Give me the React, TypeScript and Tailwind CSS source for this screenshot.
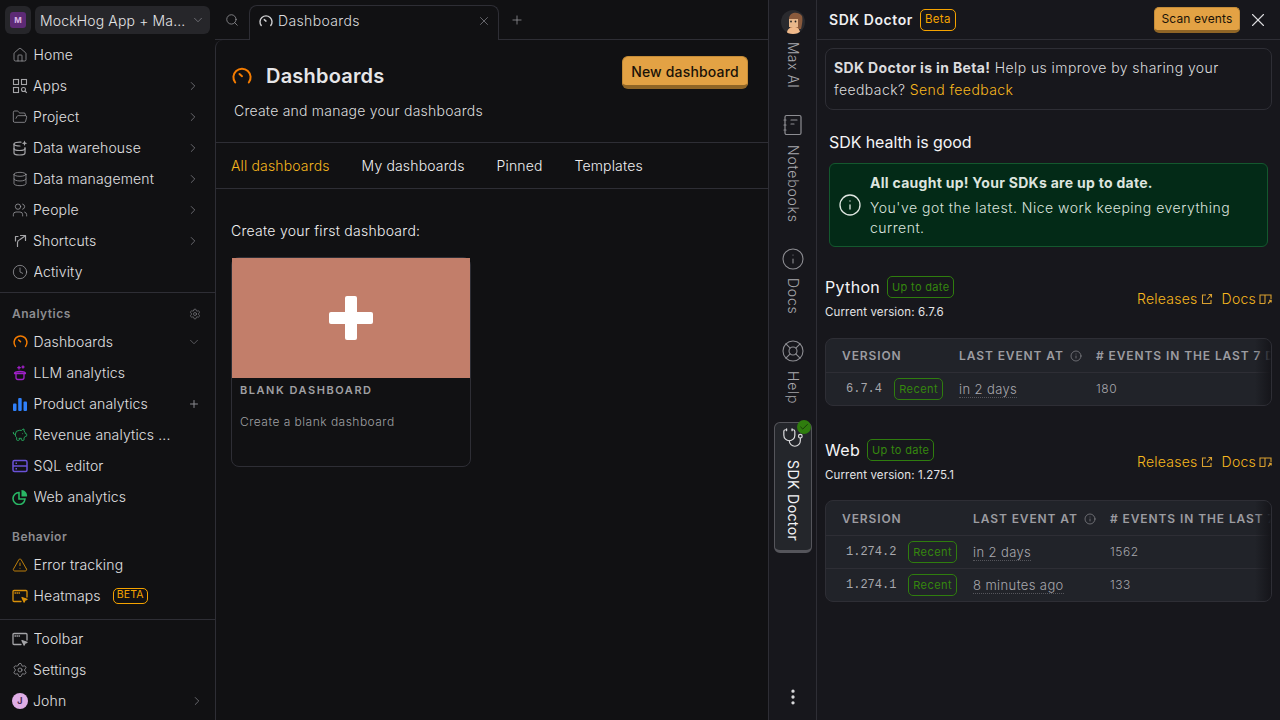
import React from "react";
import {
  Home, FolderOpen, Database, Users, Clock, ChevronRight, ChevronDown, Settings, Plus, TriangleAlert, Search, X, Info, LifeBuoy, Stethoscope, Check, EllipsisVertical, PiggyBank,
} from "lucide-react";

const Gauge = ({ className = "" }: { className?: string }) => (
  <svg viewBox="0 0 20 20" className={className} fill="none" stroke="currentColor" strokeWidth="2" strokeLinecap="round">
    <path d="M3.200 16.500A8.600 8.600 0 1 1 16.800 16.500" />
    <path d="M7.500 8 L10 10.200" />
  </svg>
);

const WindowCursor = ({ className = "" }: { className?: string }) => (
  <svg viewBox="0 0 16 16" className={className} fill="none" stroke="currentColor" strokeWidth="1.300" strokeLinecap="round" strokeLinejoin="round">
    <path d="M9 13.500H2a1 1 0 0 1-1-1V3.500a1 1 0 0 1 1-1h12a1 1 0 0 1 1 1V9" />
    <path d="M3 5h.5M5 5h.5M7 5h.5" />
    <path d="M10 9.500l5 1.800-2 .8-.8 2z" fill="currentColor" />
  </svg>
);

const AppsIcon = ({ className = "" }: { className?: string }) => (
  <svg viewBox="0 0 16 16" className={className} fill="none" stroke="currentColor" strokeWidth="1.100">
    <rect x="1.500" y="1.500" width="5" height="5" />
    <rect x="9.500" y="1.500" width="5" height="5" />
    <rect x="1.500" y="9.500" width="5" height="5" />
    <circle cx="11.500" cy="11.500" r="2" />
    <path d="M13 13l1.800 1.800" />
  </svg>
);

const WarehouseIcon = ({ className = "" }: { className?: string }) => (
  <svg viewBox="0 0 16 16" className={className} fill="none" stroke="currentColor" strokeWidth="1.200" strokeLinecap="round">
    <path d="M9 2.200C5 2 2 2.700 2 4v9c0 1.200 2.500 2 5.500 2s5.500-.8 5.500-2V7.500" />
    <path d="M2 4c0 1.200 2.500 2 6 2M2 8.500c0 1.200 2.500 2 5.500 2s5.500-.8 5.500-2" />
    <path d="M12.500 0.500l.8 2 2 .8-2 .8-.8 2-.8-2-2-.8 2-.8z" fill="currentColor" stroke="none" />
  </svg>
);

const ShortcutIcon = ({ className = "" }: { className?: string }) => (
  <svg viewBox="0 0 16 16" className={className} fill="none" stroke="currentColor" strokeWidth="1.200" strokeLinecap="round" strokeLinejoin="round">
    <path d="M5.500 13.500V9.500C5.500 8 6.500 7 8 6.500L13 3" />
    <path d="M8.500 2.500h5v5" />
    <path d="M3.500 8V3.500H6" />
  </svg>
);

const WebIcon = ({ className = "" }: { className?: string }) => (
  <svg viewBox="0 0 16 16" className={className} fill="none" stroke="currentColor" strokeWidth="1.600">
    <path d="M7 3.500a6 6 0 1 0 6 6.500H7z" />
    <path d="M9.500 1a5.500 5.500 0 0 1 5.500 6.500H9.500z" fill="currentColor" stroke="none" />
  </svg>
);

const NotebookIcon = ({ className = "" }: { className?: string }) => (
  <svg viewBox="0 0 20 22" className={className} fill="none" stroke="currentColor" strokeWidth="1.200" strokeLinecap="round">
    <rect x="2" y="1.500" width="16" height="19" rx="1.500" />
    <path d="M1 6h2M1 11h2M1 16h2" />
    <path d="M8 6h6M8 10h3" />
  </svg>
);

const LinkOut = ({ className = "" }: { className?: string }) => (
  <svg viewBox="0 0 12 12" className={className} fill="none" stroke="currentColor" strokeWidth="1.100">
    <path d="M5 2H1.500v8.500H10V7" />
    <path d="M6 6.500L10.500 1.500M7.500 1.500h3v3" />
  </svg>
);

const DocLink = ({ className = "" }: { className?: string }) => (
  <svg viewBox="0 0 13 12" className={className} fill="none" stroke="currentColor" strokeWidth="1.100">
    <path d="M6 2H1v8.500h5M6 2v8.500M6 2h6v4" />
    <path d="M9 10.500l3-3M10 7.300h2.200v2.200" />
  </svg>
);

const Chev = () => <ChevronRight className="w-3.5 h-3.5 text-[#8a8a90] mr-[1px]" strokeWidth={1.2} />;

function Row({ icon, label, right, gap = "gap-[5.500px]" }: { icon: React.ReactNode; label: React.ReactNode; right?: React.ReactNode; gap?: string }) {
  return (
    <div className={`flex items-center h-[31px] pl-[12px] pr-[14px] ${gap}`}>
      <span className="w-[16px] h-[16px] flex items-center justify-center shrink-0">{icon}</span>
      <span className="flex-1 min-w-0 text-[14px] text-[#e0e0e2] truncate whitespace-nowrap">{label}</span>
      {right}
    </div>
  );
}

const ic = "w-4 h-4 text-[#a5a5a8]";
const sw = 1.1;

function Sidebar() {
  return (
    <div className="w-[215px] shrink-0 flex flex-col bg-[#111113]">
      <div className="h-[39px] shrink-0 flex items-start pt-[6px] pl-[5px] pr-[5px] gap-[4px]">
        <div className="w-[26px] h-[28px] rounded-[6px] bg-[#26262a] flex items-center justify-center">
          <div className="w-[16px] h-[16px] rounded-[3px] bg-[#5d2a75] text-[#d9b6e3] text-[8px] font-bold flex items-center justify-center">M</div>
        </div>
        <div className="flex-1 min-w-0 h-[28px] rounded-[6px] bg-[#26262a] flex items-center pl-[5px] pr-[5px]">
          <span className="flex-1 text-[14px] text-[#e4e4e6] whitespace-nowrap">MockHog App + Ma...</span>
          <ChevronDown className="w-3.5 h-3.5 text-[#8a8a90]" strokeWidth={1.2} />
        </div>
      </div>
      <Row icon={<Home className={ic} strokeWidth={sw} />} label="Home" />
      <Row icon={<AppsIcon className={ic} />} label="Apps" gap="gap-[5px]" right={<Chev />} />
      <Row icon={<FolderOpen className={ic} strokeWidth={sw} />} label="Project" gap="gap-[5px]" right={<Chev />} />
      <Row icon={<WarehouseIcon className={ic} />} label="Data warehouse" gap="gap-[5px]" right={<Chev />} />
      <Row icon={<Database className={ic} strokeWidth={sw} />} label="Data management" gap="gap-[5px]" right={<Chev />} />
      <Row icon={<Users className={ic} strokeWidth={sw} />} label="People" gap="gap-[5px]" right={<Chev />} />
      <Row icon={<ShortcutIcon className={ic} />} label="Shortcuts" gap="gap-[5px]" right={<Chev />} />
      <Row icon={<Clock className={ic} strokeWidth={sw} />} label="Activity" />
      <div className="mt-[5px] h-px bg-[#2e2e35] shrink-0" />
      <div className="h-[42px] shrink-0 flex items-center justify-between pl-[12px] pr-[14px]">
        <span className="text-[12px] font-semibold tracking-[0.04em] text-[#8c8c90]">Analytics</span>
        <Settings className="w-3 h-3 text-[#8c8c90]" strokeWidth={1.2} />
      </div>
      <div className="-mt-[9px] flex flex-col">
        <Row icon={<Gauge className="w-[15px] h-[15px] text-[#f57c00]" />} label="Dashboards" right={<ChevronDown className="w-3.5 h-3.5 text-[#77777c]" strokeWidth={1.2} />} />
        <Row icon={
          <svg viewBox="0 0 16 16" className="w-4 h-4 text-[#a020c8]" fill="none" stroke="currentColor" strokeWidth="1.300" strokeLinecap="round"><path d="M3 8.500h10M4 8.500v4a2 2 0 0 0 2 2h4a2 2 0 0 0 2-2v-4M2.500 8.500c0-1.400 2-2 5.500-2s5.500.6 5.500 2M7 1.500v2.500M5.800 2.700h2.500M11 1v2M10 2h2" /></svg>
        } label="LLM analytics" />
        <Row icon={
          <svg viewBox="0 0 16 16" className="w-4 h-4 text-[#2f80fa]" fill="currentColor"><rect x="1" y="7.500" width="3.500" height="7.500" rx="1" /><rect x="6.200" y="2" width="3.500" height="13" rx="1" /><rect x="11.500" y="5.500" width="3.500" height="9.500" rx="1" /></svg>
        } label="Product analytics" right={<Plus className="w-3 h-3 text-[#8a8a90] mr-[1px]" strokeWidth={2} />} />
        <Row icon={<PiggyBank className="w-4 h-4 text-[#29b765]" strokeWidth={1.3} />} label="Revenue analytics ..." />
        <Row icon={
          <svg viewBox="0 0 16 16" className="w-4 h-4 text-[#6a52d6]" fill="none" stroke="currentColor" strokeWidth="1.500"><rect x="1" y="2.500" width="14" height="11" rx="1.500" /><path d="M1 8h14" /><path d="M3.500 5.300h1.500M3.500 10.800h1.500" /></svg>
        } label="SQL editor" />
        <Row icon={<WebIcon className="w-4 h-4 text-[#29b765]" />} label="Web analytics" />
      </div>
      <div className="h-[40px] shrink-0 flex items-center pl-[12px] pt-[9px]">
        <span className="text-[12px] font-semibold tracking-[0.04em] text-[#8c8c90]">Behavior</span>
      </div>
      <div className="-mt-[3px] flex flex-col">
        <Row icon={<TriangleAlert className="w-4 h-4 text-[#d9910a]" strokeWidth={1.3} />} label="Error tracking" />
        <Row icon={<WindowCursor className="w-4 h-4 text-[#d9910a]" />} label={
          <span className="flex items-center gap-[12px]">Heatmaps<span className="h-[16px] flex items-center border border-[#f5a300] rounded-[5px] text-[#f5a300] text-[10.500px] font-normal leading-none px-[3px]">BETA</span></span>
        } />
      </div>
      <div className="flex-1" />
      <div className="h-px bg-[#2e2e35] shrink-0" />
      <div className="pt-[3px] pb-[4px] flex flex-col">
        <Row icon={<WindowCursor className={ic} />} label="Toolbar" />
        <Row icon={<Settings className={ic} strokeWidth={sw} />} label="Settings" gap="gap-[5px]" />
        <Row icon={<span className="w-4 h-4 rounded-full bg-[#dfaee6] text-[#4b2a55] text-[9px] font-bold flex items-center justify-center">J</span>} label="John" gap="gap-[5px]" right={<ChevronRight className="w-3.5 h-3.5 text-[#8a8a90] -mr-[3px]" strokeWidth={1.2} />} />
      </div>
    </div>
  );
}

function Main() {
  return (
    <div className="flex-1 min-w-0 flex flex-col bg-[#111113]">
      <div className="h-[40px] shrink-0 flex items-end relative">
        <div className="absolute left-0 right-0 bottom-0 h-px bg-[#2e2e35]" />
        <div className="w-[34px] h-[40px] flex items-center justify-center"><Search className="w-[14px] h-[14px] text-[#9a9a9e]" strokeWidth={1.3} /></div>
        <div className="relative z-10 w-[250px] h-[35px] border border-b-0 border-[#2e2e35] rounded-t-[8px] bg-[#111113] flex items-center pl-[9px] pr-[7px] pb-[5px] gap-[5px]">
          <Gauge className="w-[14px] h-[14px] text-[#cfcfd1]" />
          <span className="flex-1 text-[14px] tracking-[0.026em] text-[#dcdcde]">Dashboards</span>
          <X className="w-[14px] h-[14px] text-[#8a8a90]" strokeWidth={1.2} />
        </div>
        <div className="w-[36px] h-[40px] flex items-center justify-center"><Plus className="w-[14px] h-[14px] text-[#9a9a9e]" strokeWidth={1.3} /></div>
      </div>
      <div className="flex-1 border-l border-[#2e2e35] rounded-tl-[8px] flex flex-col">
        <div className="h-[103px] shrink-0 flex items-start justify-between pl-[15px] pr-[20px] pt-[16px] border-b border-[#2e2e35]">
          <div className="flex flex-col">
            <div className="flex items-center gap-[14px] h-[40px] ml-[1px]">
              <Gauge className="w-[20px] h-[20px] text-[#f57c00]" />
              <span className="text-[20px] font-semibold tracking-[0.01em] text-[#e6e6e8]">Dashboards</span>
            </div>
            <span className="mt-[5px] ml-[3px] text-[14px] leading-[20px] tracking-[0.23px] text-[#dcdcde]">Create and manage your dashboards</span>
          </div>
          <div className="h-[33px] w-[126px] rounded-[6px] bg-[#e3a244] border border-[#c48c38] border-b-[4px] border-b-[#8f6526] flex items-center justify-center text-[14px] font-medium tracking-[0.012em] text-[#1a1208]">New dashboard</div>
        </div>
        <div className="h-[46px] shrink-0 flex items-center gap-[32px] pl-[15px] border-b border-[#2e2e35] text-[14px] text-[#f0f0f2]">
          <span className="text-[#f7b81e]">All dashboards</span>
          <span>My dashboards</span>
          <span>Pinned</span>
          <span>Templates</span>
        </div>
        <div className="pl-[15px] pt-[32px]">
          <div className="text-[14px] tracking-[0.019em] text-[#f0f0f2] leading-[20px]">Create your first dashboard:</div>
          <div className="mt-[16px] w-[240px] h-[210px] rounded-[8px] border border-[#2e2e35]">
            <div className="h-[120px] bg-[#c27e6a] flex items-center justify-center">
              <svg viewBox="0 0 44 44" className="w-[44px] h-[44px]" fill="white"><rect x="16" y="0" width="12" height="44" rx="2" /><rect x="0" y="16" width="44" height="12" rx="2" /></svg>
            </div>
            <div className="px-[8px] pt-[4px]">
              <div className="text-[11px] font-semibold tracking-[0.14em] text-[#a0a0a3]">BLANK DASHBOARD</div>
              <div className="mt-[14px] text-[12px] tracking-[0.04em] text-[#a0a0a3]">Create a blank dashboard</div>
            </div>
          </div>
        </div>
      </div>
    </div>
  );
}

function SideItem({ icon, label, gap, track = "tracking-[0.056em]" }: { icon: React.ReactNode; label: string; gap: string; track?: string }) {
  return (
    <div className={`flex flex-col items-center ${gap}`}>
      {icon}
      <span className={`[writing-mode:vertical-rl] text-[14px] text-[#a8a8ad] leading-none ${track}`}>{label}</span>
    </div>
  );
}

function Rail() {
  return (
    <div className="w-[49px] shrink-0 bg-[#17171c] border-l border-r border-[#2e2e35] flex flex-col items-center pt-[10px] pb-[13px]">
      <div className="w-[24px] h-[24px] rounded-full bg-[#2a2a2e] overflow-hidden flex items-center justify-center">
        <svg viewBox="0 0 24 24" className="w-[24px] h-[24px]"><path d="M8 8c1-6 9-7 13-2 1 3 0 9-1 13H9z" fill="#8a5a3c" /><path d="M8 9h9v8H8z" fill="#e8b88c" /><path d="M6 22c1-4 4-5 7-5s5 1 6 5v2H6z" fill="#f0b98a" /><circle cx="10" cy="11.500" r="0.900" fill="#222" /><circle cx="14.500" cy="11.500" r="0.900" fill="#222" /></svg>
      </div>
      <div className="mt-[8px]"><SideItem gap="" icon={null} label="Max AI" track="tracking-[0.016em]" /></div>
      <div className="mt-[26px]"><SideItem gap="gap-[9px]" icon={<NotebookIcon className="w-[20px] h-[22px] text-[#8d8d92]" />} label="Notebooks" /></div>
      <div className="mt-[24px]"><SideItem gap="gap-[7px]" icon={<Info className="w-[24px] h-[24px] text-[#8d8d92]" strokeWidth={1.1} />} label="Docs" /></div>
      <div className="mt-[25px]"><SideItem gap="gap-[8px]" icon={<LifeBuoy className="w-[24px] h-[24px] text-[#8d8d92]" strokeWidth={1.1} />} label="Help" /></div>
      <div className="mt-[17px] relative w-[38px] h-[131px] rounded-[6px] bg-[#24262b] border border-[#55555b] border-b-[3px] flex flex-col items-center pt-[4px] gap-[11px]">
        <Stethoscope className="w-[22px] h-[22px] text-[#dcdcde]" strokeWidth={1.3} />
        <span className="[writing-mode:vertical-rl] text-[14px] font-normal tracking-[0.03em] text-[#f4f4f6] leading-none">SDK Doctor</span>
        <span className="absolute -top-[3px] right-0 w-[14px] h-[14px] rounded-full bg-[#2f7d0e] flex items-center justify-center"><Check className="w-[10px] h-[10px] text-[#14300a]" strokeWidth={2} /></span>
      </div>
      <div className="flex-1" />
      <EllipsisVertical className="w-[20px] h-[20px] text-[#d8d8da]" strokeWidth={2} />
    </div>
  );
}

const RecentBadge = () => (
  <span className="h-[22px] px-[4px] rounded-[5px] border border-[#2f7d0e] text-[#35870e] text-[11px] font-normal tracking-[0.04em] flex items-center">Recent</span>
);

function VersionTable({ rows, first, head, mt }: { rows: { v: string; at: string; n: string }[]; first: string; head: string; mt: string }) {
  return (
    <div className={`relative rounded-[8px] border border-[#2e2e35] bg-[#212329] overflow-hidden ${mt}`}>
      <div className={`flex items-center pt-[1px] text-[12px] font-semibold tracking-[0.075em] text-[#9c9ca1] whitespace-nowrap ${head}`}>
        <div className={`${first} pl-[16px] shrink-0`}>VERSION</div>
        <div className="w-[137px] shrink-0 flex items-center gap-[6px]">LAST EVENT AT<Info className="w-3 h-3" strokeWidth={1.2} /></div>
        <div className="shrink-0">{"# EVENTS IN THE LAST 7 DAYS"}</div>
      </div>
      {rows.map((r) => (
        <div key={r.v} className="flex h-[33px] items-center border-t border-[#2e2e35] text-[#a8a8ad] whitespace-nowrap">
          <div className={`${first} pl-[20px] pr-[16px] shrink-0 flex items-center justify-between`}>
            <span className="font-['Liberation_Mono',monospace] font-normal tracking-normal text-[12px]">{r.v}</span>
            <RecentBadge />
          </div>
          <div className="w-[137px] shrink-0 text-[13px] tracking-[0.03em] pt-[2px]"><span className="border-b border-dotted border-[#55555b]">{r.at}</span></div>
          <div className="text-[12px] tracking-[0.046em]">{r.n}</div>
        </div>
      ))}
      <div className="absolute right-0 top-0 bottom-0 w-[16px] bg-gradient-to-l from-[#15151a] to-transparent" />
    </div>
  );
}

function SdkSection({ name, version, children }: { name: string; version: string; children: React.ReactNode }) {
  return (
    <div>
      <div className="flex items-center justify-between">
        <div className="flex flex-col">
          <div className="flex items-center gap-[7px] h-[22px]">
            <span className="text-[16px] font-normal tracking-[0.02em] text-[#f4f4f6]">{name}</span>
            <span className="h-[22px] px-[4px] rounded-[5px] border border-[#2f7d0e] text-[#35870e] text-[11px] font-normal tracking-[0.03em] flex items-center">Up to date</span>
          </div>
          <span className="mt-[7px] text-[11.500px] font-normal leading-[14px] tracking-[0.012em] text-[#e4e4e6]">{version}</span>
        </div>
        <div className="flex items-center gap-[9px] pt-[2px] text-[14px] tracking-[0.018em] text-[#f7b81e]">
          <span className="flex items-center gap-[3px]">Releases<LinkOut className="w-3 h-3 text-[#d9a030]" /></span>
          <span className="flex items-center gap-[3px]">Docs<DocLink className="w-[13px] h-3 text-[#d9a030]" /></span>
        </div>
      </div>
      {children}
    </div>
  );
}

function Panel() {
  return (
    <div className="flex-1 min-w-0 bg-[#17171c] flex flex-col">
      <div className="h-[40px] shrink-0 border-b border-[#2e2e35] flex items-center pl-[12px] pr-[11px]">
        <span className="text-[14px] font-semibold tracking-[0.04em] text-[#f0f0f2]">SDK Doctor</span>
        <span className="ml-[7px] h-[22px] px-[4px] rounded-[5px] border border-[#f5a300] text-[#f5a300] text-[11.500px] font-normal tracking-[0.03em] flex items-center">Beta</span>
        <div className="flex-1" />
        <div className="h-[26px] w-[86px] rounded-[5px] bg-[#e3a244] border border-[#c48c38] border-b-[3px] border-b-[#8f6526] flex items-center justify-center text-[12px] font-normal tracking-[0.012em] text-[#1a1208]">Scan events</div>
        <X className="ml-[7px] w-[22px] h-[22px] text-[#dcdcde]" strokeWidth={1.2} />
      </div>
      <div className="px-[8px] pt-[8px] flex flex-col">
        <div className="h-[62px] rounded-[8px] border border-[#2e2e35] px-[8px] py-[8px] text-[14px] leading-[22px] tracking-[0.03em] text-[#dcdcde]">
          <strong className="font-bold tracking-[0.025em] text-[#dcdcde]">SDK Doctor is in Beta!</strong> Help us improve by sharing your feedback? <span className="text-[#f7b81e]">Send feedback</span>
        </div>
        <div className="mt-[21px] ml-[4px] text-[16px] font-normal leading-[22px] tracking-[-0.005em] text-[#f4f4f6]">SDK health is good</div>
        <div className="mt-[10px] mx-[4px] h-[84px] rounded-[6px] border border-[#14582e] bg-[#032a17] flex items-center pl-[8px] pr-[8px] gap-[8px] text-[#dde4df]">
          <Info className="w-[24px] h-[24px] shrink-0 text-[#dfe6e1]" strokeWidth={1.3} />
          <div className="flex flex-col">
            <span className="text-[14px] font-bold tracking-[0.02em] leading-[20px]">All caught up! Your SDKs are up to date.</span>
            <span className="mt-[5px] text-[14px] tracking-[0.036em] leading-[20px]">You've got the latest. Nice work keeping everything current.</span>
          </div>
        </div>
        <div className="mt-[29px]">
          <SdkSection name="Python" version="Current version: 6.7.6">
            <VersionTable mt="mt-[19px]" head="h-[33px]" first="w-[133px]" rows={[{ v: "6.7.4", at: "in 2 days", n: "180" }]} />
          </SdkSection>
        </div>
        <div className="mt-[33px]">
          <SdkSection name="Web" version="Current version: 1.275.1">
            <VersionTable mt="mt-[18px]" head="h-[34px]" first="w-[147px]" rows={[{ v: "1.274.2", at: "in 2 days", n: "1562" }, { v: "1.274.1", at: "8 minutes ago", n: "133" }]} />
          </SdkSection>
        </div>
      </div>
    </div>
  );
}

export default function App() {
  return (
    <div className="w-[1280px] h-[720px] overflow-hidden flex bg-[#111113] font-['Inter',sans-serif] font-light tracking-[0.15px]">
      <Sidebar />
      <div className="w-[553px] shrink-0 flex"><Main /></div>
      <Rail />
      <Panel />
    </div>
  );
}
